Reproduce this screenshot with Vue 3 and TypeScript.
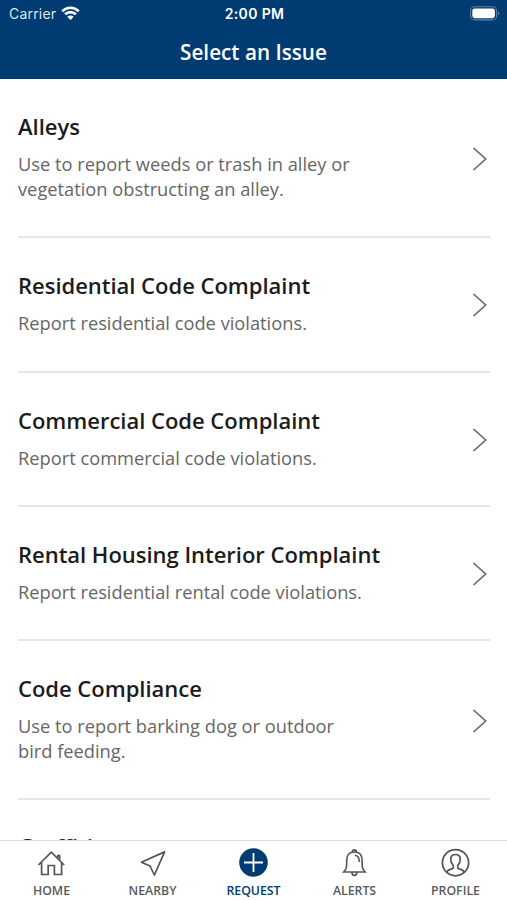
<script setup lang="ts">
interface Issue {
  title: string
  lines: string[]
}

const issues: Issue[] = [
  { title: 'Alleys', lines: ['Use to report weeds or trash in alley or', 'vegetation obstructing an alley.'] },
  { title: 'Residential Code Complaint', lines: ['Report residential code violations.'] },
  { title: 'Commercial Code Complaint', lines: ['Report commercial code violations.'] },
  { title: 'Rental Housing Interior Complaint', lines: ['Report residential rental code violations.'] },
  { title: 'Code Compliance', lines: ['Use to report barking dog or outdoor', 'bird feeding.'] },
  { title: 'Graffiti', lines: [] },
]
</script>

<template>
  <div class="screen">
    <header class="header">
      <div class="status">
        <div class="carrier">
          <span>Carrier</span>
          <svg class="wifi" width="19" height="15" viewBox="0 0 19 15" fill="none" stroke="#fff" stroke-width="2.6">
            <path d="M1.2 5.2C6 .6 13 .6 17.8 5.2" />
            <path d="M4.1 8.3C7.2 5.4 11.8 5.4 14.9 8.3" />
            <path d="M6.3 10.7C8.1 9 10.9 9 12.7 10.7L9.5 14Z" fill="#fff" stroke="none" />
          </svg>
        </div>
        <div class="time">2:00 PM</div>
        <svg class="battery" width="30" height="15" viewBox="0 0 30 15">
          <rect x="0.6" y="0.7" width="26" height="13.2" rx="4" fill="none" stroke="#5f83a6" stroke-width="1.1" />
          <rect x="2.3" y="2.4" width="22.6" height="9.8" rx="2.4" fill="#fff" />
          <path d="M28 5.2c2 .8 2 3.4 0 4.2z" fill="#5f83a6" />
        </svg>
      </div>
      <h1 class="heading">Select an Issue</h1>
    </header>

    <main class="list">
      <section v-for="issue in issues" :key="issue.title" class="issue">
        <div class="copy">
          <h2 class="title">{{ issue.title }}</h2>
          <p class="description">
            <span v-for="line in issue.lines" :key="line" class="line">{{ line }}</span>
          </p>
        </div>
        <svg class="chevron" width="16" height="26" viewBox="0 0 16 26" fill="none" stroke="#666" stroke-width="1.6">
          <path d="M1.5 2L13.7 13L1.5 24" />
        </svg>
      </section>
    </main>

    <nav class="tabs">
      <a class="tab">
        <svg class="icon" width="30" height="30" viewBox="0 0 30 30" fill="none" stroke="#555" stroke-width="1.7">
          <path d="M1.4 17L14.3 4.1L27.2 17M4.6 14.4V26.5H11.2V17.5H17.4V26.5H24.6V14.4M20.8 9.6V7.6H22.6V12" />
        </svg>
        <span>HOME</span>
      </a>
      <a class="tab">
        <svg class="icon" width="30" height="30" viewBox="0 0 30 30" fill="none" stroke="#555" stroke-width="1.7" stroke-linejoin="round">
          <path d="M26.6 3.9L3.4 14.2L12 18L16.4 27Z" />
        </svg>
        <span>NEARBY</span>
      </a>
      <a class="tab active">
        <svg class="icon" width="30" height="30" viewBox="0 0 30 30">
          <circle cx="14.5" cy="14.5" r="14.3" fill="#003b71" />
          <path d="M5 14.5H24M14.5 5V24" stroke="#fff" stroke-width="1.8" />
        </svg>
        <span>REQUEST</span>
      </a>
      <a class="tab">
        <svg class="icon" width="30" height="30" viewBox="0 0 30 30" fill="none" stroke="#555" stroke-width="1.6">
          <path d="M12.3 3.8C12.4 1.2 16.4 1.2 16.5 3.8M3.7 24C6.5 21 6.7 19.5 6.7 12.2C6.7 6.7 9.4 4 14.4 4S22.1 6.7 22.1 12.2C22.1 19.5 22.3 21 25.1 24ZM11.9 24.3C11.9 28.4 16.9 28.4 16.9 24.3M15 7.2C18.3 7.5 19.3 9.5 19.3 14" />
        </svg>
        <span>ALERTS</span>
      </a>
      <a class="tab">
        <svg class="icon" width="30" height="30" viewBox="0 0 30 30" fill="none" stroke="#555" stroke-width="1.7">
          <circle cx="14.5" cy="14.7" r="13.1" />
          <path d="M5.4 24C6.8 21.8 9 21.6 12.2 20.2V17.3C10.4 15.6 9.7 13.4 9.7 11.2C9.7 8.2 11.5 6.5 14.5 6.5S19.3 8.2 19.3 11.2C19.3 13.4 18.6 15.6 16.8 17.3V20.2C20 21.6 22.2 21.8 23.6 24" />
        </svg>
        <span>PROFILE</span>
      </a>
    </nav>
  </div>
</template>

<style>
body {
  margin: 0;
  background: #fff;
}
</style>

<style scoped>
.screen {
  display: flex;
  flex-direction: column;
  width: 507px;
  height: 900px;
  overflow: hidden;
  font-family: 'Open Sans', sans-serif;
}

.header {
  flex: none;
  box-sizing: border-box;
  height: 79px;
  background: #003b71;
  color: #fff;
}

.status {
  display: grid;
  grid-template-columns: 1fr auto 1fr;
  align-items: center;
  height: 27px;
  padding: 0 7px 0 9px;
  font-family: Inter, sans-serif;
  font-size: 14px;
}

.carrier {
  display: flex;
  align-items: center;
  gap: 5px;
  color: #dce6ef;
  letter-spacing: 0.2px;
}

.time {
  font-weight: 600;
  letter-spacing: 0.35px;
}

.battery {
  justify-self: end;
}

.heading {
  margin: 0;
  font-size: 20.7px;
  line-height: 50px;
  font-weight: 600;
  text-align: center;
}

.list {
  flex: 1;
  min-height: 0;
  overflow: hidden;
  padding: 0 17px 0 18px;
}

.issue {
  display: flex;
  align-items: center;
  justify-content: space-between;
  box-sizing: border-box;
  padding: 33px 2px 31px 0;
  border-bottom: 2px solid #e6e6e6;
}

.issue:last-child {
  padding-top: 32px;
}

.title {
  margin: 0 0 11px;
  color: #1c1c1c;
  font-size: 22px;
  line-height: 28px;
  font-weight: 600;
  letter-spacing: -0.02px;
  white-space: nowrap;
}

.description {
  margin: 0;
  padding-bottom: 4.3px;
  color: #666;
  font-size: 18.27px;
  line-height: 25px;
}

.line {
  display: block;
  white-space: nowrap;
}

.chevron {
  flex: none;
}

.tabs {
  flex: none;
  display: grid;
  grid-template-columns: repeat(5, 101px);
  justify-content: center;
  box-sizing: border-box;
  height: 60px;
  border-top: 1px solid #dedede;
  background: #fff;
}

.tab {
  display: flex;
  flex-direction: column;
  align-items: center;
  gap: 5px;
  padding-top: 7px;
  color: #5a5a5a;
  font-size: 12.3px;
  line-height: 16px;
  font-weight: 600;
}

.active {
  color: #003b71;
}
</style>
